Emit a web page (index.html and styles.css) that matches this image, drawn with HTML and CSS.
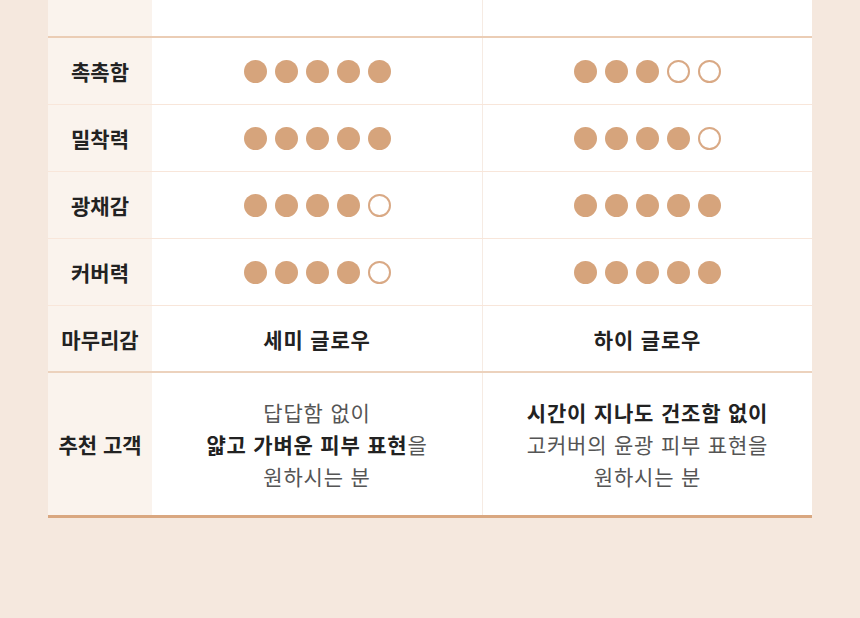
FILE: index.html
```html
<!DOCTYPE html>
<html lang="ko">
<head>
<meta charset="utf-8">
<link rel="stylesheet" href="styles.css">
</head>
<body>
<div class="page">
  <div class="table">
    <div class="row row-top">
      <div class="label"></div>
      <div class="cell"></div>
      <div class="cell cell-right"></div>
    </div>
    <div class="row">
      <div class="label">촉촉함</div>
      <div class="cell"><span class="dot"></span><span class="dot"></span><span class="dot"></span><span class="dot"></span><span class="dot"></span></div>
      <div class="cell cell-right"><span class="dot"></span><span class="dot"></span><span class="dot"></span><span class="dot empty"></span><span class="dot empty"></span></div>
    </div>
    <div class="row">
      <div class="label">밀착력</div>
      <div class="cell"><span class="dot"></span><span class="dot"></span><span class="dot"></span><span class="dot"></span><span class="dot"></span></div>
      <div class="cell cell-right"><span class="dot"></span><span class="dot"></span><span class="dot"></span><span class="dot"></span><span class="dot empty"></span></div>
    </div>
    <div class="row">
      <div class="label">광채감</div>
      <div class="cell"><span class="dot"></span><span class="dot"></span><span class="dot"></span><span class="dot"></span><span class="dot empty"></span></div>
      <div class="cell cell-right"><span class="dot"></span><span class="dot"></span><span class="dot"></span><span class="dot"></span><span class="dot"></span></div>
    </div>
    <div class="row">
      <div class="label">커버력</div>
      <div class="cell"><span class="dot"></span><span class="dot"></span><span class="dot"></span><span class="dot"></span><span class="dot empty"></span></div>
      <div class="cell cell-right"><span class="dot"></span><span class="dot"></span><span class="dot"></span><span class="dot"></span><span class="dot"></span></div>
    </div>
    <div class="row row-finish">
      <div class="label">마무리감</div>
      <div class="cell text-strong">세미 글로우</div>
      <div class="cell cell-right text-strong">하이 글로우</div>
    </div>
    <div class="row row-rec">
      <div class="label">추천 고객</div>
      <div class="cell desc">
        <p>답답함 없이</p>
        <p><b>얇고 가벼운 피부 표현</b>을</p>
        <p>원하시는 분</p>
      </div>
      <div class="cell cell-right desc">
        <p><b>시간이 지나도 건조함 없이</b></p>
        <p>고커버의 윤광 피부 표현을</p>
        <p>원하시는 분</p>
      </div>
    </div>
  </div>
</div>
</body>
</html>
```

FILE: styles.css
```css
* { box-sizing: border-box; }
html, body {
  margin: 0;
  padding: 0;
  background: #f5e8de;
}
body {
  font-family: "Noto Sans CJK KR", "Noto Sans", sans-serif;
  color: #222;
}
.page {
  width: 860px;
  height: 618px;
  padding: 0 48px;
  overflow: hidden;
}
.table {
  width: 764px;
  background: #fff;
  border-bottom: 3px solid #d9a780;
}
.row {
  display: grid;
  grid-template-columns: 104px 330px 330px;
  height: 67px;
  border-bottom: 1px solid #f8e6da;
}
.row-top {
  height: 38px;
  border-bottom: 2px solid #ebcdb5;
}
.row-finish {
  height: 67px;
  border-bottom: 2px solid #ecd2bd;
}
.row-rec {
  height: 142px;
  border-bottom: none;
}
.label {
  background: #faf3ed;
  display: flex;
  align-items: center;
  justify-content: center;
  font-size: 21px;
  font-weight: 700;
  color: #222;
}
.cell {
  display: flex;
  align-items: center;
  justify-content: center;
  gap: 8px;
}
.cell-right {
  border-left: 1px solid #f6ebe3;
}
.dot {
  width: 23px;
  height: 23px;
  border-radius: 50%;
  background: #d6a47c;
}
.dot.empty {
  background: #fff;
  border: 2px solid #d9a985;
}
.text-strong {
  font-size: 21px;
  font-weight: 700;
  letter-spacing: 0.8px;
  color: #222;
}
.desc {
  flex-direction: column;
  gap: 0;
  font-size: 21px;
  letter-spacing: 0.8px;
  line-height: 32px;
  color: #555;
}
.desc p { margin: 0; }
.desc b {
  font-weight: 700;
  color: #222;
}
```
